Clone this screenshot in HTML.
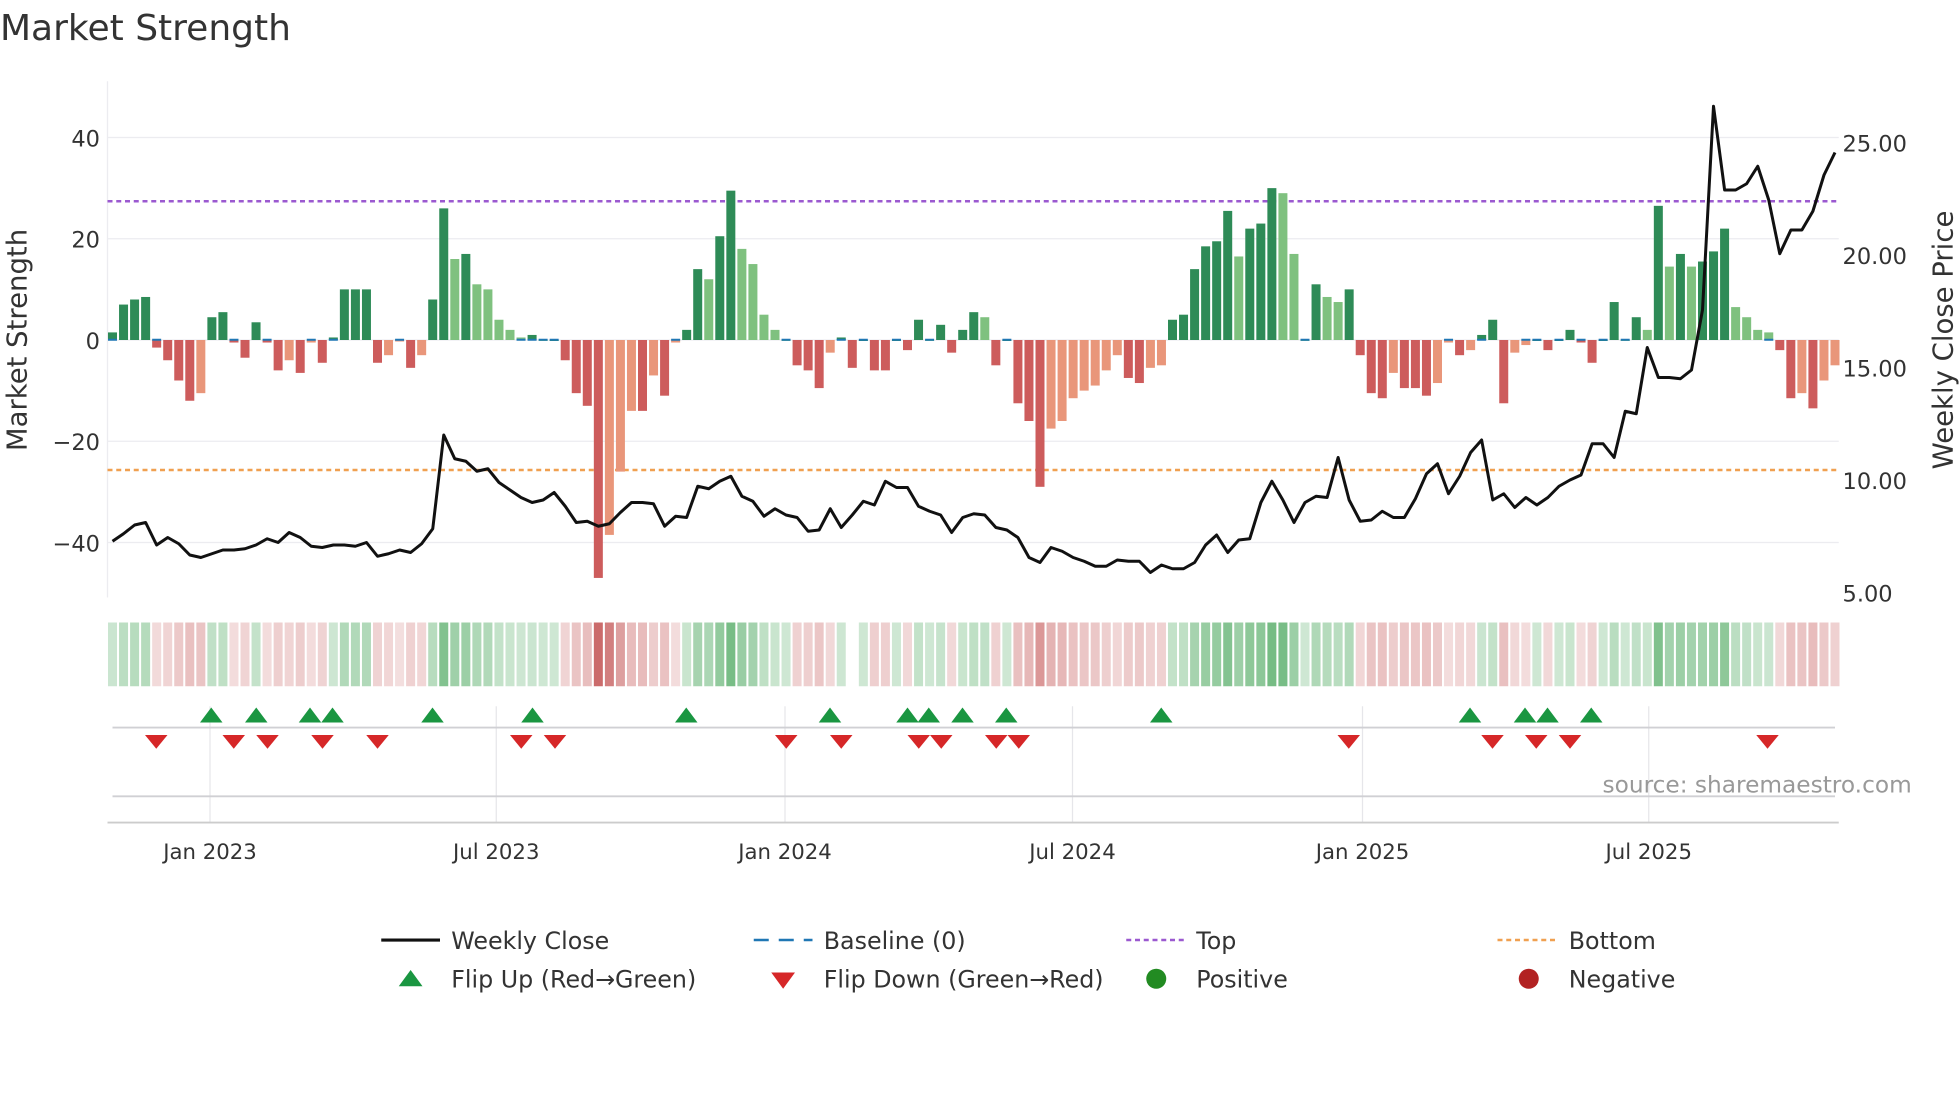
<!DOCTYPE html>
<html><head><meta charset="utf-8"><style>
html,body{margin:0;padding:0;background:#fff;width:1960px;height:1102px;overflow:hidden}
svg{display:block;font-family:"DejaVu Sans","Liberation Sans",sans-serif}
</style></head><body>
<svg id="s" width="1960" height="1102" viewBox="0 0 1568 881.6" xmlns="http://www.w3.org/2000/svg">
<text x="0" y="32" font-size="28.8" fill="#333">Market Strength</text>
<g id="g"></g>
<text x="1282" y="634" font-size="18.6" fill="#999">source: sharemaestro.com</text>
<text transform="translate(21,272) rotate(-90)" text-anchor="middle" font-size="22" fill="#333">Market Strength</text>
<text transform="translate(1562,272) rotate(-90)" text-anchor="middle" font-size="22" fill="#333">Weekly Close Price</text>
<g font-size="18" fill="#333" text-anchor="end">
<text x="80" y="117">40</text><text x="80" y="198">20</text><text x="80" y="279">0</text><text x="80" y="360">−20</text><text x="80" y="441">−40</text>
</g>
<g font-size="18" fill="#333">
<text x="1474" y="121">25.00</text><text x="1474" y="211">20.00</text><text x="1474" y="301">15.00</text><text x="1474" y="391">10.00</text><text x="1474" y="481">5.00</text>
</g>
<g font-size="17" fill="#333" text-anchor="middle">
<text x="168" y="687">Jan 2023</text><text x="397" y="687">Jul 2023</text><text x="628" y="687">Jan 2024</text><text x="858" y="687">Jul 2024</text><text x="1090" y="687">Jan 2025</text><text x="1319" y="687">Jul 2025</text>
</g>
<g font-size="19" fill="#333">
<line x1="305" y1="752" x2="352" y2="752" stroke="#111" stroke-width="2.5"/><text x="361" y="759">Weekly Close</text>
<line x1="603" y1="752" x2="650" y2="752" stroke="#1f77b4" stroke-width="2" stroke-dasharray="12 8"/><text x="659" y="759">Baseline (0)</text>
<line x1="901" y1="752" x2="948" y2="752" stroke="#9b59d0" stroke-width="2" stroke-dasharray="4 3"/><text x="957" y="759">Top</text>
<line x1="1198" y1="752" x2="1245" y2="752" stroke="#f0a050" stroke-width="2" stroke-dasharray="4 3"/><text x="1255" y="759">Bottom</text>
<path d="M319,789 L338,789 L328.5,776Z" fill="#1a9641"/><text x="361" y="790">Flip Up (Red→Green)</text>
<path d="M617,778 L636,778 L626.5,791Z" fill="#d62728"/><text x="659" y="790">Flip Down (Green→Red)</text>
<circle cx="925" cy="783" r="8" fill="#228b22"/><text x="957" y="790">Positive</text>
<circle cx="1223" cy="783" r="8" fill="#b22222"/><text x="1255" y="790">Negative</text>
</g>
</svg>
<script>
var v=[1.5,7,8,8.5,-1.5,-4,-8,-12,-10.5,4.5,5.5,-0.5,-3.5,3.5,-0.5,-6,-4,-6.5,-0.5,-4.5,0.5,10,10,10,-4.5,-3,-0.3,-5.5,-3,8,26,16,17,11,10,4,2,0.5,1,0,0,-4,-10.5,-13,-47,-38.5,-26,-14,-14,-7,-11,-0.5,2,14,12,20.5,29.5,18,15,5,2,0,-5,-6,-9.5,-2.5,0.5,-5.5,0,-6,-6,0,-2,4,0,3,-2.5,2,5.5,4.5,-5,0,-12.5,-16,-29,-17.5,-16,-11.5,-10,-9,-6,-3,-7.5,-8.5,-5.5,-5,4,5,14,18.5,19.5,25.5,16.5,22,23,30,29,17,0,11,8.5,7.5,10,-3,-10.5,-11.5,-6.5,-9.5,-9.5,-11,-8.5,-0.5,-3,-2,1,4,-12.5,-2.5,-1,0,-2,0,2,-0.5,-4.5,0,7.5,0,4.5,2,26.5,14.5,17,14.5,15.5,17.5,22,6.5,4.5,2,1.5,-2,-11.5,-10.5,-13.5,-8,-5];
var py=[433,427,420,418,436,430,435,444,446,443,440,440,439,436,431,434,426,430,437,438,436,436,437,434,445,443,440,442,435,423,348,367,369,377,375,386,392,398,402,400,394,405,418,417,421,419,410,402,402,403,421,413,414,389,391,385,381,397,401,413,407,412,414,425,424,407,422,412,401,404,385,390,390,405,409,412,426,414,411,412,422,424,430,446,450,438,441,446,449,453,453,448,449,449,458,452,455,455,450,436,428,442,432,431,402,385,400,418,402,397,398,366,400,417,416,409,414,414,399,379,371,395,381,362,352,400,395,406,398,404,398,389,384,380,355,355,366,329,331,278,302,302,303,296,248,85,152,152,147,133,160,203,184,184,169,140,122];
var h='',n=v.length,dx=(1468-90)/(n-1);
function X(i){return 90+i*dx}
[110,191,272,353,434].forEach(function(y){h+='<line x1="86" x2="1471" y1="'+y+'" y2="'+y+'" stroke="#ececf0" stroke-width="1"/>'});
[168,397,628,858,1090,1319].forEach(function(x){h+='<line x1="'+x+'" x2="'+x+'" y1="565" y2="658" stroke="#e6e6ea" stroke-width="1"/>'});
h+='<line x1="86" x2="86" y1="65" y2="478" stroke="#ececf0"/>';
h+='<line x1="90" x2="1468" y1="582" y2="582" stroke="#d0d0d4" stroke-width="1.5"/>';
h+='<line x1="90" x2="1468" y1="637" y2="637" stroke="#d0d0d4" stroke-width="1.5"/>';
h+='<line x1="86" x2="1471" y1="658" y2="658" stroke="#ccc" stroke-width="1.5"/>';
h+='<line x1="86" x2="1471" y1="161" y2="161" stroke="#9b59d0" stroke-width="2" stroke-dasharray="4 3"/>';
h+='<line x1="86" x2="1471" y1="376" y2="376" stroke="#f0a050" stroke-width="2" stroke-dasharray="4 3"/>';
for(var i=0;i<n;i++){var x=X(i),a=v[i],p=i?v[i-1]:0,c;
 if(a>=0)c=a>=p?'#2e8b57':'#7fc17f';else c=a<=p?'#cd5c5c':'#e9967a';
 var y0=272,y1=272-a*4.05;h+='<rect x="'+(x-3.6)+'" y="'+Math.min(y0,y1)+'" width="7.2" height="'+Math.max(Math.abs(y1-y0),0.8)+'" fill="'+c+'"/>';
 if(Math.abs(a)<2)h+='<rect x="'+(x-3.6)+'" y="271" width="7.2" height="1.6" fill="#1f77b4"/>';
 var t=Math.min(Math.abs(a)/47,1);
 var hc=a>=0?'rgba(60,160,80,'+(0.25+0.45*Math.min(a/30,1)).toFixed(2)+')':'rgba(190,70,70,'+(0.18+0.62*t).toFixed(2)+')';
 if(x<677||x>684)h+='<rect x="'+(x-3.6)+'" y="498" width="7.2" height="51" fill="'+hc+'"/>';}
var d='';for(var i=0;i<py.length;i++){d+=(i?'L':'M')+(90+i*(1468-90)/(py.length-1)).toFixed(1)+','+py[i]}
h+='<path d="'+d+'" fill="none" stroke="#111" stroke-width="2.4" stroke-linejoin="round"/>';
[169,205,248,266,346,426,549,664,726,743,770,805,929,1176,1220,1238,1273].forEach(function(x){h+='<path d="M'+(x-9)+',578 L'+(x+9)+',578 L'+x+',566Z" fill="#1a9641"/>'});
[125,187,214,258,302,417,444,629,673,735,753,797,815,1079,1194,1229,1256,1414].forEach(function(x){h+='<path d="M'+(x-9)+',588 L'+(x+9)+',588 L'+x+',599Z" fill="#d62728"/>'});
document.getElementById('g').innerHTML=h;
</script>
</body></html>
